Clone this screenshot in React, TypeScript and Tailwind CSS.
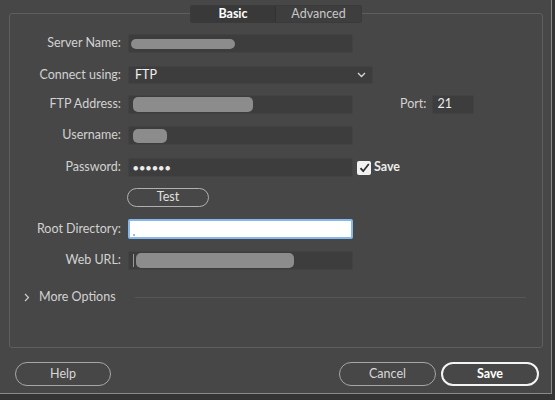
import React from "react";

const font = { fontFamily: "Lato, 'Open Sans', sans-serif" };

function Label({ children }: { children: React.ReactNode }) {
  return (
    <div className="w-[112px] shrink-0 text-right pr-[1px] text-[12.5px] text-[#d2d2d2] leading-none">
      {children}
    </div>
  );
}

function Field({ children, w = "w-[225px]" }: { children?: React.ReactNode; w?: string }) {
  return (
    <div className={`${w} h-[19px] bg-[#3d3d3d] border border-[#424242] rounded-[2px] flex items-center px-[4px] text-[12.5px] text-[#ececec]`}>
      {children}
    </div>
  );
}

function Blob({ w, h = "h-[11px]" }: { w: string; h?: string }) {
  return <div className={`${w} ${h} bg-[#8c8c8c] rounded-[5px]`} />;
}

export default function App() {
  return (
    <div className="w-[555px] h-[400px] bg-[#343434] overflow-hidden" style={font}>
      <div className="w-[552px] h-[394px] bg-[#474747] border-r border-b border-[#8a8a8a] pt-[13px] pl-[9px]">
        {/* panel */}
        <div className="relative w-[534px] h-[335px] border border-[#5e5e5e] rounded-[3px]">
          {/* tabs */}
          <div className="absolute left-1/2 -translate-x-1/2 top-[-9px] flex h-[18px] border border-[#3a3a3a] rounded-[2px] overflow-hidden">
            <div className="w-[85px] bg-[#393939] flex items-center justify-center text-[12.5px] font-bold text-white border-r border-[#333]">
              Basic
            </div>
            <div className="w-[85px] bg-[#3e3e3e] flex items-center justify-center text-[12.5px] text-[#c8c8c8]">
              Advanced
            </div>
          </div>

          <div className="flex flex-col pt-[20px]">
            {/* Server Name */}
            <div className="flex items-center gap-[6px]">
              <Label>Server Name:</Label>
              <Field>
                <div className="-ml-[2px]">
                  <Blob w="w-[104px]" h="h-[10px]" />
                </div>
              </Field>
            </div>
            {/* Connect using */}
            <div className="flex items-center gap-[6px] mt-[13px]">
              <Label>Connect using:</Label>
              <div className="w-[245px] h-[18px] bg-[#3d3d3d] border border-[#424242] rounded-[2px] flex items-center justify-between pl-[6px] pr-[6px] text-[12.5px] text-[#f0f0f0]">
                <span>FTP</span>
                <svg width="9" height="6" viewBox="0 0 9 6" fill="none">
                  <path d="M1 1 L4.5 4.5 L8 1" stroke="#d8d8d8" strokeWidth="1.3" />
                </svg>
              </div>
            </div>
            {/* FTP Address */}
            <div className="flex items-center gap-[6px] mt-[11px]">
              <Label>FTP Address:</Label>
              <Field>
                <Blob w="w-[120px]" h="h-[15px]" />
              </Field>
              <div className="ml-[41px] text-[12.5px] text-[#d2d2d2]">Port:</div>
              <div className="w-[42px] h-[19px] bg-[#3d3d3d] border border-[#424242] rounded-[2px] flex items-center px-[4px] text-[12.5px] text-[#ececec]">
                21
              </div>
            </div>
            {/* Username */}
            <div className="flex items-center gap-[6px] mt-[12px]">
              <Label>Username:</Label>
              <Field>
                <Blob w="w-[34px]" h="h-[14px]" />
              </Field>
            </div>
            {/* Password */}
            <div className="flex items-center gap-[6px] mt-[13px]">
              <Label>Password:</Label>
              <Field>
                <span className="tracking-[1px] text-[9px]">●●●●●●</span>
              </Field>
              <div className="flex items-center gap-[3px] -ml-[2px]">
                <div className="w-[14px] h-[14px] bg-[#f2f2f2] rounded-[2px] flex items-center justify-center">
                  <svg width="11" height="10" viewBox="0 0 11 10" fill="none">
                    <path d="M1.5 5.2 L4.2 8.2 L9.8 1" stroke="#2e2e2e" strokeWidth="1.8" />
                  </svg>
                </div>
                <span className="text-[12.5px] font-bold text-[#ececec]">Save</span>
              </div>
            </div>
            {/* Test */}
            <div className="flex items-center gap-[6px] mt-[11px]">
              <div className="w-[111px] shrink-0" />
              <div className="w-[82px] h-[19px] rounded-full border-[1.5px] border-[#b0b0b0] flex items-center justify-center text-[12.5px] text-[#e0e0e0]">
                Test
              </div>
            </div>
            {/* Root Directory */}
            <div className="flex items-center gap-[6px] mt-[12px]">
              <Label>Root Directory:</Label>
              <div className="w-[225px] h-[20px] bg-white border-[2px] border-[#86b8ee] rounded-[2px] flex items-end px-[3px] pb-[1px]">
                <div className="w-[2px] h-[2px] bg-[#b8b8b8]" />
              </div>
            </div>
            {/* Web URL */}
            <div className="flex items-center gap-[6px] mt-[12px]">
              <Label>Web URL:</Label>
              <Field>
                <div className="w-[1px] h-[13px] bg-[#9a9a9a] mr-[2px]" />
                <Blob w="w-[158px]" h="h-[15px]" />
              </Field>
            </div>
            {/* More Options */}
            <div className="flex items-center mt-[18px] pl-[14px]">
              <svg width="6" height="9" viewBox="0 0 6 9" fill="none">
                <path d="M1 1 L4.5 4.5 L1 8" stroke="#cfcfcf" strokeWidth="1.2" />
              </svg>
              <span className="ml-[9px] text-[12.5px] text-[#d2d2d2]">More Options</span>
              <div className="ml-[19px] w-[391px] h-px bg-[#565656]" />
            </div>
          </div>
        </div>

        {/* buttons */}
        <div className="flex items-center mt-[14px] pl-[6px] pr-[12px]">
          <div className="w-[96px] h-[24px] rounded-full border-[1.5px] border-[#a6a6a6] flex items-center justify-center text-[12.5px] text-[#d8d8d8]">
            Help
          </div>
          <div className="flex-1" />
          <div className="w-[97px] h-[24px] rounded-full border-[1.5px] border-[#a6a6a6] flex items-center justify-center text-[12.5px] text-[#d8d8d8]">
            Cancel
          </div>
          <div className="ml-[5px] w-[98px] h-[24px] rounded-full border-[2px] border-[#f4f4f4] flex items-center justify-center text-[12.5px] font-bold text-white">
            Save
          </div>
        </div>
      </div>
    </div>
  );
}
